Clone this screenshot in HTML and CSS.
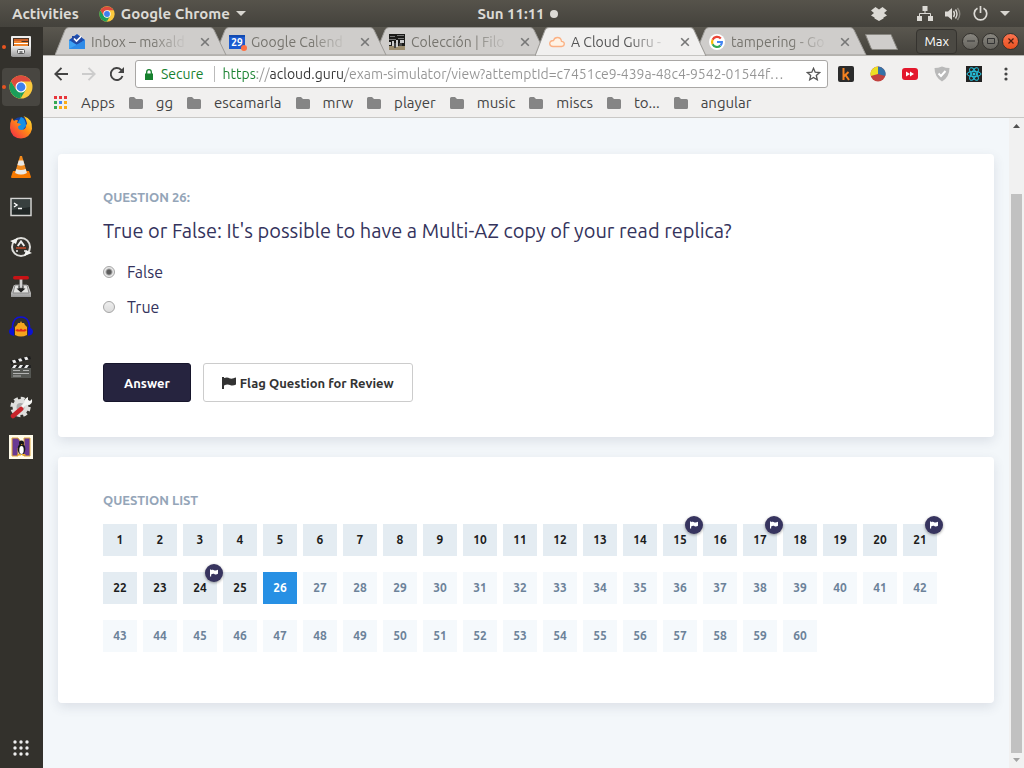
FILE: index.html
```html
<!DOCTYPE html>
<html lang="en">
<head>
<meta charset="utf-8">
<meta name="viewport" content="width=device-width, initial-scale=1">
<title>A Cloud Guru - Exam Simulator</title>
<link rel="stylesheet" href="styles.css">
</head>
<body>
<svg class="defs" aria-hidden="true">
  <defs>
    <symbol id="chrome" viewBox="0 0 24 24">
      <circle cx="12" cy="12" r="11.500" fill="#fbc93d"/>
      <path d="M2 6.300 7.200 14.800 12 17.500 11.500 23.500A11.500 11.500 0 0 1 2 6.300z" fill="#1b9e5a"/>
      <path d="M12 17.500 16.800 14.700 11.500 23.500z" fill="#1b9e5a"/>
      <path d="M2 6.300A11.500 11.500 0 0 1 22 6.500H12V12L7.200 14.800z" fill="#dd4b3e"/>
      <circle cx="12" cy="12" r="5.500" fill="#fff"/>
      <circle cx="12" cy="12" r="4.400" fill="#3f80ee"/>
    </symbol>
    <symbol id="folder" viewBox="0 0 14 12"><path d="M0 1.500Q0 0 1.500 0H5L7 2H12.500Q14 2 14 3.500V10.500Q14 12 12.500 12H1.500Q0 12 0 10.500z" fill="#858585"/></symbol>
    <symbol id="flag" viewBox="0 0 14 12"><path d="M0 0H2V1C5 0 6 .5 8 1.500C10 2 12 1 14 .5V7.500C12 8.500 10 9 8 8C6 7 4 7.500 2 8.500V12H0z"/></symbol>
    <symbol id="tab" viewBox="0 0 172 28" preserveAspectRatio="none"><path d="M0 28 10 3Q11 .5 14 .5H155Q158 .5 159 3L171 28z" fill="currentColor" stroke="#9c9a96"/></symbol>
    <symbol id="close" viewBox="0 0 10 10"><path d="M1.200 1.200 8.800 8.800M8.800 1.200 1.200 8.800" stroke="#777" stroke-width="1.600"/></symbol>
    <linearGradient id="metal" x2="0" y2="1"><stop stop-color="#eee"/><stop offset="1" stop-color="#999"/></linearGradient>
    <linearGradient id="fire" x1="1" y1="0" x2="0" y2="1"><stop stop-color="#fff03a"/><stop offset=".45" stop-color="#ff8a16"/><stop offset="1" stop-color="#f2204e"/></linearGradient>
  </defs>
</svg>

<header class="topbar">
  <div class="topbar-left">
    <button class="plain">Activities</button>
    <button class="plain app-menu"><svg width="16" height="16"><use href="#chrome"/></svg>Google Chrome<svg width="10" height="5" viewBox="0 0 10 5"><path d="M0 0H10L5 5z" fill="#d8d6d0"/></svg></button>
  </div>
  <button class="plain clock">Sun 11:11<span class="dot"></span></button>
  <div class="topbar-right">
    <svg class="dropbox" width="16" height="14" viewBox="0 0 16 14"><path d="M4.500 0 8 2.500 11.500 0 16 3.500 13 6 16 8.500 12.500 10.500V11.500L8 14 3.500 11.500V10.500L0 8.500 3 6 0 3.500z" fill="#dcdad5"/></svg>
    <svg width="16" height="15" viewBox="0 0 16 15"><path d="M5.500 0h5v5h-5zM0 10h5v5H0zM11 10h5v5h-5z" fill="#dcdad5"/><path d="M8 4V7.500M2.500 11V7.500H13.500V11" fill="none" stroke="#dcdad5"/></svg>
    <svg width="16" height="14" viewBox="0 0 16 14"><path d="M0 4.500H3L7 1V13L3 9.500H0z" fill="#dcdad5"/><path d="M8.500 4Q10.500 7 8.500 10M10.500 2.500Q13.500 7 10.500 11.500" fill="none" stroke="#dcdad5" stroke-width="1.400"/><path d="M12.500 1Q17 7 12.500 13" fill="none" stroke="#8b8982" stroke-width="1.400"/></svg>
    <svg width="15" height="15" viewBox="0 0 15 15"><path d="M4.500 2.300A6.200 6.200 0 1 0 10.500 2.300M7.500 0V7" fill="none" stroke="#dcdad5" stroke-width="1.700"/></svg>
    <svg width="10" height="5" viewBox="0 0 10 5"><path d="M0 0H10L5 5z" fill="#d8d6d0"/></svg>
  </div>
</header>

<div class="desktop">
  <nav class="dock" aria-label="Dock">
    <button class="dock-item running" aria-label="Files"><svg width="24" height="24" viewBox="0 0 24 24"><rect x="2" y="1" width="20" height="20" rx="1" fill="#eee"/><rect x="4" y="3" width="16" height="10" fill="#4a3325"/><path d="M5 4H19V6H5z" fill="#c9622b"/><path d="M5 6H12L13 7H19V12H5z" fill="#f0842c"/><path d="M5 8H19V9H5z" fill="#fff"/><path d="M2 11H22V20Q22 22 20 22H4Q2 22 2 20z" fill="url(#metal)"/><rect x="8.500" y="14.500" width="7" height="4" rx="1" fill="#eee" stroke="#555"/><path d="M10.500 17H13.500" stroke="#333" stroke-width="1.200"/></svg></button>
    <button class="dock-item running current" aria-label="Google Chrome"><svg width="24" height="24"><use href="#chrome"/></svg></button>
    <button class="dock-item" aria-label="Firefox"><svg width="24" height="24" viewBox="0 0 24 24"><circle cx="12" cy="12" r="10" fill="#173f9c"/><path d="M12 2Q17 4 17 11L12 17 7 11z" fill="#1590e6"/><path d="M3 3 5 6Q7 4.500 9 5.500L8 8Q11 8 12 9.500L9 11.500Q9 15 13 15Q18 14 17 9L18 10Q18 5 14.500 1Q24 4 23 14Q21 23 12 23.500Q2 23 1 13Q1 7 3 3z" fill="url(#fire)"/></svg></button>
    <button class="dock-item" aria-label="VLC"><svg width="24" height="24" viewBox="0 0 24 24"><path d="M4 16H20L22 22Q22 23 21 23H3Q2 23 2 22z" fill="#f57900"/><path d="M11 1H13L18 18Q12 21.500 6 18z" fill="#f28a1d"/><path d="M9.700 5.500H14.300L15.600 10Q12 11.500 8.400 10zM7.300 14Q12 16 16.700 14L17.900 18Q12 21 6.100 18z" fill="#e9e9e7"/></svg></button>
    <button class="dock-item" aria-label="Terminal"><svg width="24" height="24" viewBox="0 0 24 24"><rect x="2" y="3.500" width="20" height="17" fill="#222827" stroke="#d4d4d2" stroke-width="1.500"/><path d="M3 4H21V12L3 15z" fill="#485050" opacity=".6"/><path d="M5 8 8 10 5 12M9 13.500H13" fill="none" stroke="#fff" stroke-width="1.400"/></svg></button>
    <button class="dock-item" aria-label="Software Updater"><svg width="24" height="24" viewBox="0 0 24 24"><circle cx="12" cy="12" r="9" fill="none" stroke="#dddcd9" stroke-width="2"/><path d="M1 6 9 3 7 9zM23 18 15 21 17 15z" fill="#f4f4f2"/><path d="M8.700 11 12 6.500 15.300 11" fill="none" stroke="#eee" stroke-width="2"/><path d="M7 13H17" stroke="#d84b26" stroke-width="1.300"/><path d="M8 15V17M16 15V17" stroke="#eee" stroke-width="1.500"/></svg></button>
    <button class="dock-item" aria-label="Installer"><svg width="24" height="24" viewBox="0 0 24 24"><path d="M5 10H19L22 18V22H2V18z" fill="url(#metal)"/><path d="M6 10H18L20 18H4z" fill="#e4e4e2" stroke="#888"/><path d="M12 17.500 7.500 13.500H9.500V10.500H14.500V13.500H16.500z" fill="#222"/><path d="M10.700 4H13.300V13H10.700z" fill="#ddd" stroke="#777" stroke-width=".6"/><rect x="4" y="1" width="16" height="3.500" rx="1.700" fill="#c81215"/></svg></button>
    <button class="dock-item" aria-label="Audacity"><svg width="24" height="24" viewBox="0 0 24 24"><path d="M6 20 6 12 8 10 9 8 11 8 12 6 13 8 15 8 16 10 18 12V20Q12 23 6 20z" fill="#f4a51c"/><path d="M6 15 9 14 10 15 12 13.500 14 15 16 14 18 15 16 16.500H8z" fill="#e22919"/><path d="M3.500 14V11Q4.500 2 12 2Q19.500 2 20.500 11V14" fill="none" stroke="#1111d8" stroke-width="1.600"/><path d="M5 12V21Q0 20 0 16.500 0 13 5 12zM19 12V21Q24 20 24 16.500 24 13 19 12z" fill="#0b12d4"/></svg></button>
    <button class="dock-item" aria-label="Video Editor"><svg width="24" height="24" viewBox="0 0 24 24"><rect x="2" y="10" width="20" height="13" fill="#555753"/><path d="M1 6 21 1 22 4 2 9z" fill="#1e1e1e"/><path d="M3 5.500 6 4.800 7.500 7.500 4.500 8.200zM9 4 12 3.300 13.500 6 10.500 6.700zM15 2.500 18 1.800 19.500 4.500 16.500 5.200z" fill="#eee"/><path d="M2 10H22V13H2z" fill="#222"/><path d="M5 10H8L6 13H3zM11 10H14L12 13H9zM17 10H20L18 13H15z" fill="#eee"/><path d="M4 15.500H11M14 15.500H20M4 18.500H20M4 21H12" stroke="#ccc" stroke-width=".8"/></svg></button>
    <button class="dock-item" aria-label="Settings"><svg width="24" height="24" viewBox="0 0 24 24"><circle cx="11.500" cy="12" r="8" fill="#dfdfdd"/><circle cx="11.500" cy="12" r="8.700" fill="none" stroke="#dfdfdd" stroke-width="3" stroke-dasharray="4 2.830"/><circle cx="11.500" cy="12" r="4" fill="#aaa"/><path d="M9 16 17 8" stroke="#f5f5f3" stroke-width="3"/><path d="M16 9Q14 4 19 2L19 5 21 6 23 4Q24 10 18 10z" fill="#f5f5f3"/><path d="M4 21 12 14" stroke="#c8242a" stroke-width="4.500" stroke-linecap="round"/></svg></button>
    <button class="dock-item" aria-label="Linux Notebook"><svg width="24" height="24" viewBox="0 0 24 24"><path d="M0 0H24V24H0z" fill="#fffbea"/><path d="M3 3H9L15 11V3H21V21H15L9 13V21H3z" fill="#6a3a93" stroke="#e3a93a"/><ellipse cx="12.500" cy="14" rx="3.800" ry="5.500" fill="#171717"/><circle cx="12.500" cy="8" r="2.500" fill="#171717"/><ellipse cx="12.500" cy="15" rx="2.200" ry="4" fill="#fff"/><path d="M9 19H12V20.500H8zM13 19H16L17 20.500H13zM12 9H13.500L12.700 10.500z" fill="#efac22"/></svg></button>
    <button class="dock-item show-apps" aria-label="Show Applications"><svg width="16" height="16" viewBox="0 0 16 16" fill="#eee"><circle cx="2" cy="2" r="1.700"/><circle cx="8" cy="2" r="1.700"/><circle cx="14" cy="2" r="1.700"/><circle cx="2" cy="8" r="1.700"/><circle cx="8" cy="8" r="1.700"/><circle cx="14" cy="8" r="1.700"/><circle cx="2" cy="14" r="1.700"/><circle cx="8" cy="14" r="1.700"/><circle cx="14" cy="14" r="1.700"/></svg></button>
  </nav>

  <div class="browser">
    <div class="tabstrip">
      <div class="tab">
        <svg class="tab-shape"><use href="#tab"/></svg>
        <svg class="favicon" viewBox="0 0 16 16"><path d="M0 6 8 0 16 6V15H0z" fill="#1651bd"/><path d="M3 2H13V10H3z" fill="#234aa5"/><path d="M0 6 8 11 16 6V15H0z" fill="#3ea2f5"/><path d="M0 15 16 6V15z" fill="#2f8be8"/><path d="M5 4.500 7.500 7 12.500 2" fill="none" stroke="#fff" stroke-width="1.700"/></svg>
        <span class="tab-title">Inbox – maxald</span>
        <button class="tab-close" aria-label="Close tab"><svg width="10" height="10"><use href="#close"/></svg></button>
      </div>
      <div class="tab">
        <svg class="tab-shape"><use href="#tab"/></svg>
        <svg class="favicon calendar" viewBox="0 0 16 16"><path d="M0 1H16V15H0z" fill="#1a5ad0"/><path d="M0 1H16V3H0z" fill="#124ab0"/><text x="8" y="12" text-anchor="middle">29</text><circle cx="15" cy="14" r="3" fill="#ff7043"/></svg>
        <span class="tab-title">Google Calend</span>
        <button class="tab-close" aria-label="Close tab"><svg width="10" height="10"><use href="#close"/></svg></button>
      </div>
      <div class="tab">
        <svg class="tab-shape"><use href="#tab"/></svg>
        <svg class="favicon" viewBox="0 0 16 16"><path d="M0 0H16V16H0z" fill="#1a1a18"/><path d="M0 12H16V16H0z" fill="#9b8c6d"/><path d="M1 2H6V3H1zM8 1H15V2H8zM0 5H7V6H0zM9 4H15V5H9z" fill="#777"/><path d="M3 7H5V12H3zM7 6H9V13H7zM11 6H15V9H11zM0 8H2V11H0z" fill="#ccc"/><path d="M5 9H7V14H5zM10 9H13V12H10z" fill="#444"/></svg>
        <span class="tab-title">Colección | Filo</span>
        <button class="tab-close" aria-label="Close tab"><svg width="10" height="10"><use href="#close"/></svg></button>
      </div>
      <div class="tab active">
        <svg class="tab-shape"><use href="#tab"/></svg>
        <svg class="favicon" viewBox="0 0 16 16"><path d="M4 12.500H12.500Q15.300 12.300 15.300 9.800 15.200 7.500 12.500 7.300 12 3.500 8.300 3.500 5.500 3.500 4.500 6.500 .8 6.600 .7 9.600 .9 12.300 4 12.500z" fill="#fff3e5" stroke="#fbb184" stroke-width="1.300"/></svg>
        <span class="tab-title">A Cloud Guru -</span>
        <button class="tab-close" aria-label="Close tab"><svg width="10" height="10"><use href="#close"/></svg></button>
      </div>
      <div class="tab">
        <svg class="tab-shape"><use href="#tab"/></svg>
        <svg class="favicon" viewBox="0 0 16 16"><circle cx="8" cy="8" r="8" fill="#fff"/><g fill="none" stroke-width="2.200"><path d="M11.800 4.500A5 5 0 0 0 3.600 5.700" stroke="#ea4335"/><path d="M3.600 5.700A5 5 0 0 0 3.600 10.300" stroke="#fbbc05"/><path d="M3.600 10.300A5 5 0 0 0 11.500 11.600" stroke="#34a853"/><path d="M11.500 11.600Q13 10 12.900 8H8" stroke="#4285f4"/></g></svg>
        <span class="tab-title">tampering - Go</span>
        <button class="tab-close" aria-label="Close tab"><svg width="10" height="10"><use href="#close"/></svg></button>
      </div>
      <button class="new-tab" aria-label="New tab"><svg width="33" height="16" viewBox="0 0 33 16"><path d="M.5 .5H26L32.500 15.500H8Q6.500 15.500 6 14z" fill="#cfcdcb" stroke="#888680"/></svg></button>
      <div class="window-controls">
        <button class="profile">Max</button>
        <button class="win-btn" aria-label="Minimize"><svg width="8" height="8" viewBox="0 0 8 8"><path d="M0 4H8" stroke="#333"/></svg></button>
        <button class="win-btn" aria-label="Maximize"><svg width="8" height="8" viewBox="0 0 8 8"><path d="M.5 1.500H7.500V6.500H.5z" fill="none" stroke="#333"/></svg></button>
        <button class="win-btn win-close" aria-label="Close"><svg width="8" height="8" viewBox="0 0 8 8"><path d="M1.500 1.500 6.500 6.500M6.500 1.500 1.500 6.500" stroke="#4a1d10" stroke-width="1.200"/></svg></button>
      </div>
    </div>

    <div class="toolbar">
      <button class="plain" aria-label="Back"><svg width="14" height="14" viewBox="0 0 14 14"><path d="M14 7H1.500M7.500 .8 1.300 7 7.500 13.200" fill="none" stroke="#444" stroke-width="1.900"/></svg></button>
      <button class="plain" aria-label="Forward"><svg width="14" height="14" viewBox="0 0 14 14"><path d="M0 7H12.500M6.500 .8 12.700 7 6.500 13.200" fill="none" stroke="#ccc" stroke-width="1.900"/></svg></button>
      <button class="plain" aria-label="Reload"><svg width="14" height="14" viewBox="0 0 14 14"><path d="M12.500 9A6 6 0 1 1 11 2.700L12 3.700" fill="none" stroke="#444" stroke-width="1.900"/><path d="M14 0V6H8z" fill="#444"/></svg></button>
      <div class="omnibox">
        <svg width="8" height="11" viewBox="0 0 8 11"><path d="M0 4.500H8V11H0z" fill="#17812f"/><path d="M1.700 5V3Q1.700 .7 4 .7 6.300 .7 6.300 3V5" fill="none" stroke="#17812f" stroke-width="1.300"/></svg>
        <label class="secure" for="url">Secure</label>
        <input class="url" id="url" type="text" value="https://acloud.guru/exam-simulator/view?attemptId=c7451ce9-439a-48c4-9542-01544f…">
        <button class="plain" aria-label="Bookmark this page"><svg width="15" height="14" viewBox="0 0 15 14"><path d="M7.500 1.300 9.200 5.200 13.600 5.600 10.300 8.500 11.300 12.800 7.500 10.500 3.700 12.800 4.700 8.500 1.400 5.600 5.800 5.200z" fill="none" stroke="#555" stroke-width="1.300"/></svg></button>
      </div>
      <div class="extensions">
        <button class="plain" aria-label="Kimono"><svg width="16" height="16" viewBox="0 0 16 16"><rect width="16" height="16" rx="2" fill="#2b2b2b"/><path d="M5.500 2V14M10.500 6 6 10.200M7.500 9 11 14" fill="none" stroke="#f58220" stroke-width="2"/></svg></button>
        <button class="plain" aria-label="Charts"><svg width="16" height="16" viewBox="0 0 16 16"><circle cx="8" cy="8" r="7.500" fill="#c2423f"/><path d="M8 8V.5A7.500 7.500 0 0 0 .8 10z" fill="#ecdf23"/><path d="M8 8V.5A7.500 7.500 0 0 1 15.300 10z" fill="#3472a8"/></svg></button>
        <button class="plain" aria-label="Video speed"><svg width="16" height="16" viewBox="0 0 16 16"><rect y="2" width="16" height="12" rx="3" fill="#e3172c"/><path d="M4 5.500 8 8 4 10.500zM8 5.500 12 8 8 10.500z" fill="#fff"/></svg></button>
        <button class="plain" aria-label="Blocker"><svg width="16" height="16" viewBox="0 0 16 16"><path d="M8 .5Q12 2 15.500 2 15.500 11 8 15.500 .5 11 .5 2 4 2 8 .5z" fill="#b9b9b9"/><path d="M4.500 7.500 7 10 11.500 5" fill="none" stroke="#fff" stroke-width="2"/></svg></button>
        <button class="plain" aria-label="React tools"><svg width="16" height="16" viewBox="0 0 16 16"><path d="M0 0H16V16H0z" fill="#222"/><g fill="none" stroke="#25c3e0"><ellipse cx="8" cy="8" rx="7" ry="2.700"/><ellipse cx="8" cy="8" rx="7" ry="2.700" transform="rotate(60 8 8)"/><ellipse cx="8" cy="8" rx="7" ry="2.700" transform="rotate(120 8 8)"/></g><circle cx="8" cy="8" r="1.500" fill="#25c3e0"/></svg></button>
        <button class="plain" aria-label="Menu"><svg width="16" height="14" viewBox="0 0 16 14" fill="#444"><circle cx="8" cy="2" r="1.600"/><circle cx="8" cy="7" r="1.600"/><circle cx="8" cy="12" r="1.600"/></svg></button>
      </div>
    </div>

    <nav class="bookmarks" aria-label="Bookmarks">
      <a href="#"><svg width="14" height="14" viewBox="0 0 14 14"><path d="M0 0H3V3H0zM5 0H8V3H5zM10 0H13V3H10z" fill="#e8353a"/><path d="M0 5H3V8H0z" fill="#34a853"/><path d="M5 5H8V8H5z" fill="#4285f4"/><path d="M10 5H13V8H10zM5 10H8V13H5zM10 10H13V13H10z" fill="#fbad18"/><path d="M0 10H3V13H0z" fill="#34a853"/></svg>Apps</a>
      <a href="#"><svg width="14" height="12"><use href="#folder"/></svg>gg</a>
      <a href="#"><svg width="14" height="12"><use href="#folder"/></svg>escamarla</a>
      <a href="#"><svg width="14" height="12"><use href="#folder"/></svg>mrw</a>
      <a href="#"><svg width="14" height="12"><use href="#folder"/></svg>player</a>
      <a href="#"><svg width="14" height="12"><use href="#folder"/></svg>music</a>
      <a href="#"><svg width="14" height="12"><use href="#folder"/></svg>miscs</a>
      <a href="#"><svg width="14" height="12"><use href="#folder"/></svg>to...</a>
      <a href="#"><svg width="14" height="12"><use href="#folder"/></svg>angular</a>
    </nav>

    <div class="viewport">
      <main class="page">
        <section class="card">
          <h2 class="eyebrow">Question 26:</h2>
          <form class="question">
            <p class="prompt">True or False: It's possible to have a Multi-AZ copy of your read replica?</p>
            <label class="choice"><input type="radio" name="answer" checked>False</label>
            <label class="choice"><input type="radio" name="answer">True</label>
            <div class="actions">
              <button class="btn btn-primary" type="button">Answer</button>
              <button class="btn btn-outline" type="button"><svg width="14" height="12"><use href="#flag"/></svg>Flag Question for Review</button>
            </div>
          </form>
        </section>

        <section class="card card-list">
          <h2 class="eyebrow">Question List</h2>
          <div class="numbers">
            <button class="num done">1</button>
            <button class="num done">2</button>
            <button class="num done">3</button>
            <button class="num done">4</button>
            <button class="num done">5</button>
            <button class="num done">6</button>
            <button class="num done">7</button>
            <button class="num done">8</button>
            <button class="num done">9</button>
            <button class="num done">10</button>
            <button class="num done">11</button>
            <button class="num done">12</button>
            <button class="num done">13</button>
            <button class="num done">14</button>
            <button class="num done">15<span class="badge"><svg width="8" height="8"><use href="#flag"/></svg></span></button>
            <button class="num done">16</button>
            <button class="num done">17<span class="badge"><svg width="8" height="8"><use href="#flag"/></svg></span></button>
            <button class="num done">18</button>
            <button class="num done">19</button>
            <button class="num done">20</button>
            <button class="num done">21<span class="badge"><svg width="8" height="8"><use href="#flag"/></svg></span></button>
            <button class="num done">22</button>
            <button class="num done">23</button>
            <button class="num done">24<span class="badge"><svg width="8" height="8"><use href="#flag"/></svg></span></button>
            <button class="num done">25</button>
            <button class="num selected">26</button>
            <button class="num">27</button>
            <button class="num">28</button>
            <button class="num">29</button>
            <button class="num">30</button>
            <button class="num">31</button>
            <button class="num">32</button>
            <button class="num">33</button>
            <button class="num">34</button>
            <button class="num">35</button>
            <button class="num">36</button>
            <button class="num">37</button>
            <button class="num">38</button>
            <button class="num">39</button>
            <button class="num">40</button>
            <button class="num">41</button>
            <button class="num">42</button>
            <button class="num">43</button>
            <button class="num">44</button>
            <button class="num">45</button>
            <button class="num">46</button>
            <button class="num">47</button>
            <button class="num">48</button>
            <button class="num">49</button>
            <button class="num">50</button>
            <button class="num">51</button>
            <button class="num">52</button>
            <button class="num">53</button>
            <button class="num">54</button>
            <button class="num">55</button>
            <button class="num">56</button>
            <button class="num">57</button>
            <button class="num">58</button>
            <button class="num">59</button>
            <button class="num">60</button>
          </div>
        </section>
      </main>
      <div class="scrollbar" aria-hidden="true">
        <svg width="7" height="4" viewBox="0 0 7 4"><path d="M0 4 3.500 0 7 4z" fill="#505050"/></svg>
        <div class="thumb"></div>
        <svg width="7" height="4" viewBox="0 0 7 4"><path d="M0 0 3.500 4 7 0z" fill="#a3a3a3"/></svg>
      </div>
    </div>
  </div>
</div>
</body>
</html>
```

FILE: styles.css
```css
* { box-sizing: border-box; }

body {
  margin: 0;
  height: 100vh;
  display: flex;
  flex-direction: column;
  overflow: hidden;
  font-family: Ubuntu, "Noto Sans", sans-serif;
  font-size: 14px;
  color: #333;
}

button, input { font: inherit; color: inherit; }
button { cursor: pointer; }
svg { display: block; flex: none; }
.defs { position: absolute; width: 0; height: 0; }

.plain {
  display: flex;
  align-items: center;
  padding: 0;
  border: 0;
  background: none;
}

/* Desktop panel */
.topbar {
  flex: none;
  height: 27px;
  display: grid;
  grid-template-columns: 1fr auto 1fr;
  align-items: center;
  padding: 0 14px 0 12px;
  background: linear-gradient(#56534b, #44423c);
  color: #dcdad5;
  font-size: 15px;
  font-weight: 700;
}
.topbar-left { display: flex; gap: 20px; }
.app-menu { gap: 6px; }
.clock { gap: 5px; }
.dot { width: 8px; height: 8px; margin-right: -13px; border-radius: 50%; background: #dcdad5; }
.topbar-right { display: flex; justify-content: flex-end; align-items: center; gap: 12px; }
.dropbox { margin-right: 18px; }

.desktop { flex: 1; min-height: 0; display: flex; }

/* Dock */
.dock {
  flex: none;
  width: 43px;
  display: flex;
  flex-direction: column;
  gap: 2px;
  padding: 1px 3px 1px 2px;
  background: #33312c;
}
.dock-item {
  position: relative;
  height: 38px;
  display: flex;
  align-items: center;
  justify-content: center;
  padding: 0;
  border: 0;
  border-radius: 4px;
  background: none;
}
.dock-item.current { background: #484641; }
.dock-item.running::before {
  content: "";
  position: absolute;
  left: 0;
  top: 17px;
  width: 4px;
  height: 4px;
  border-radius: 50%;
  background: #e95420;
}
.show-apps { margin-top: auto; }

/* Browser chrome */
.browser { flex: 1; min-width: 0; display: flex; flex-direction: column; background: #f1f0ef; }

.tabstrip {
  flex: none;
  height: 29px;
  display: flex;
  align-items: flex-end;
  padding: 0 5px 0 12px;
  background: linear-gradient(#5a574f, #44423c);
  border-bottom: 1px solid #b4b2ae;
}
.tab {
  position: relative;
  z-index: 1;
  flex: 0 1 172px;
  min-width: 0;
  height: 28px;
  display: flex;
  align-items: center;
  gap: 6px;
  margin-right: -12px;
  padding: 1px 17px 0 14px;
  color: #cfcdcb;
}
.tab:nth-child(1) { z-index: 4; }
.tab:nth-child(2) { z-index: 3; }
.tab:nth-child(3) { z-index: 2; }
.tab.active { z-index: 5; height: 29px; margin-bottom: -1px; color: #f1f0ef; }
.tab-shape { position: absolute; inset: 0; width: 100%; height: 100%; }
.favicon { position: relative; width: 16px; height: 16px; overflow: visible; }
.calendar text { font-size: 10px; font-weight: 700; fill: #fff; }
.tab-title {
  position: relative;
  flex: 1;
  min-width: 0;
  white-space: nowrap;
  color: #77756f;
  mask-image: linear-gradient(90deg, #000 60%, transparent 98%);
}
.active .tab-title { color: #555; }
.tab-close { position: relative; padding: 0; margin-left: 4px; border: 0; background: none; }
.new-tab { position: relative; margin: 0 0 5px 10px; padding: 0; border: 0; background: none; }
.window-controls { margin-left: auto; align-self: center; display: flex; align-items: center; gap: 3px; }
.profile {
  height: 25px;
  margin-right: 2px;
  padding: 0 7px;
  border: 1px solid #35332f;
  border-radius: 4px;
  background: #4b4943;
  color: #fff;
  font-size: 13px;
}
.win-btn {
  width: 17px;
  height: 17px;
  display: flex;
  align-items: center;
  justify-content: center;
  padding: 0;
  border: 1px solid #33312d;
  border-radius: 50%;
  background: linear-gradient(#88867f, #66645e);
}
.win-close { background: linear-gradient(#fb7450, #e9501f); }

.toolbar {
  flex: none;
  height: 36px;
  display: flex;
  align-items: center;
  gap: 14px;
  padding: 0 10px 0 11px;
}
.omnibox {
  flex: 1;
  min-width: 0;
  height: 28px;
  display: flex;
  align-items: center;
  gap: 8px;
  margin-left: -3px;
  padding: 0 6px 0 9px;
  border: 1px solid #a9a7a5;
  border-radius: 3px;
  background: #fff;
}
.secure {
  padding-right: 10px;
  border-right: 1px solid #bbb;
  line-height: 16px;
  color: #17812f;
}
.url {
  flex: 1;
  min-width: 0;
  padding: 0;
  border: 0;
  outline: 0;
  color: transparent;
  background: linear-gradient(90deg, #17812f 0 34px, #999 34px 47px, #333 47px 122px, #949494 122px);
  background-clip: text;
}
.extensions { display: flex; align-items: center; gap: 16px; margin-left: -4px; }

.bookmarks {
  flex: none;
  height: 26px;
  display: flex;
  align-items: center;
  gap: 14px;
  padding: 0 11px 4px;
  border-bottom: 1px solid #c9c8c6;
  font-size: 15px;
}
.bookmarks a {
  display: flex;
  align-items: center;
  gap: 13px;
  color: #444;
  text-decoration: none;
}

/* Page */
.viewport { flex: 1; min-height: 0; display: flex; background: #f3f7fa; }
.page {
  flex: 1;
  min-width: 0;
  display: flex;
  flex-direction: column;
  gap: 20px;
  padding: 36px 15px;
  overflow: hidden;
}
.card {
  flex: none;
  padding: 35px 45px;
  border-radius: 4px;
  background: #fff;
  box-shadow: 0 4px 12px rgba(50, 60, 90, .12);
}
.card-list { padding-bottom: 51px; }
.eyebrow {
  margin: 0;
  font-size: 13px;
  line-height: 16px;
  font-weight: 700;
  text-transform: uppercase;
  color: #94a5b8;
}
.question { color: #34335c; }
.prompt { margin: 11px 0 14px; font-size: 20px; line-height: 30px; }
.choice {
  display: flex;
  align-items: center;
  gap: 12px;
  width: fit-content;
  margin-bottom: 10px;
  font-size: 16px;
  line-height: 25px;
}
.choice input {
  appearance: none;
  width: 12px;
  height: 12px;
  margin: 0 0 2px;
  border: 1px solid #a5a5a5;
  border-radius: 50%;
  background: linear-gradient(#eee, #dcdcdc);
}
.choice input:checked { background: radial-gradient(circle, #5c5c5c 0 2px, #e8e8e8 4px); }
.actions { display: flex; gap: 12px; margin-top: 43px; }
.btn {
  height: 39px;
  display: flex;
  align-items: center;
  gap: 4px;
  border-radius: 3px;
  font-size: 13px;
  font-weight: 700;
}
.btn-primary { padding: 0 20px; border: 1px solid #17162c; background: #26243f; color: #fff; }
.btn-outline { padding: 0 18px; border: 1px solid #ccc; background: #fff; color: #333; fill: #333; }

.numbers { display: flex; flex-wrap: wrap; gap: 16px 6px; margin-top: 16px; }
.num {
  position: relative;
  width: 34px;
  height: 32px;
  padding: 0 0 2px;
  border: 0;
  background: #f5f9fc;
  color: #6c8299;
  font-size: 12px;
  font-weight: 700;
}
.num.done { background: #e4ecf2; color: #1c1c1c; }
.num.selected { background: #2790e4; color: #fff; }
.badge {
  position: absolute;
  z-index: 1;
  top: -8px;
  right: -6px;
  width: 18px;
  height: 18px;
  display: flex;
  align-items: center;
  justify-content: center;
  border-radius: 50%;
  background: #37345f;
  fill: #fff;
  box-shadow: 0 1px 3px rgba(0, 0, 0, .4);
}

.scrollbar {
  flex: none;
  width: 15px;
  display: flex;
  flex-direction: column;
  align-items: center;
  padding: 6px 0;
  background: #f1f1f1;
}
.thumb { flex: 1; width: 11px; margin: 66px 0 5px; background: #c1c1c1; }
```
